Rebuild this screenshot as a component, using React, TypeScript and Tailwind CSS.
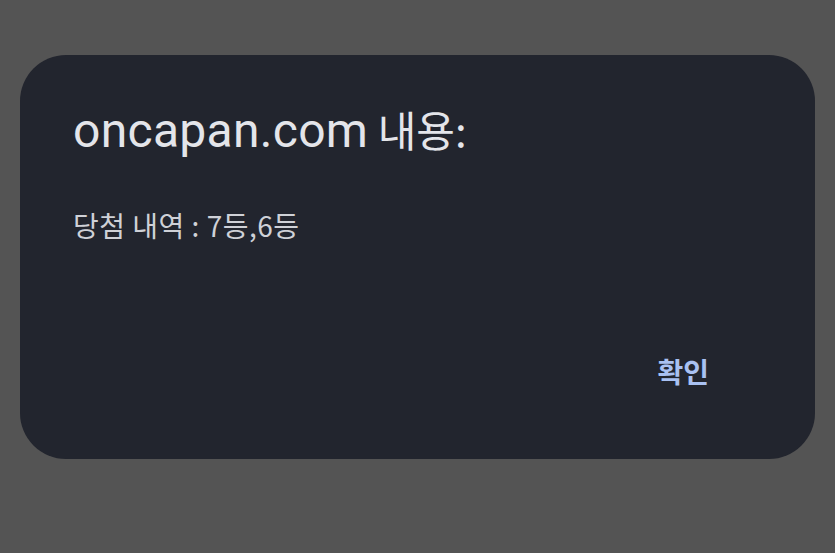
export default function App() {
  return (
    <div className="w-[835px] h-[553px] bg-[#545454] pt-[55px] px-[20px] font-['Roboto','Noto_Sans_CJK_KR',sans-serif]">
      <div className="w-[795px] h-[404px] bg-[#22252e] rounded-[46px] pl-[53px] pr-[106px] pt-[48px] flex flex-col">
        <h1 className="h-[52px] leading-[52px] text-[#e4e5ea] whitespace-nowrap">
          <span className="text-[48px] tracking-[0.3px]">oncapan.com</span>
          <span className="text-[42px] font-['Noto_Sans_CJK_KR',sans-serif]"> 내용:</span>
        </h1>
        <p className="mt-[52px] text-[28px] leading-[36px] tracking-[0.5px] text-[#cfd1d7] font-['Noto_Sans_CJK_KR',sans-serif]">당첨 내역 : 7등,6등</p>
        <div className="mt-[110px] flex justify-end">
          <button className="text-[28px] leading-[36px] font-bold text-[#a9c1f2] font-['Noto_Sans_CJK_KR',sans-serif]">확인</button>
        </div>
      </div>
    </div>
  );
}
